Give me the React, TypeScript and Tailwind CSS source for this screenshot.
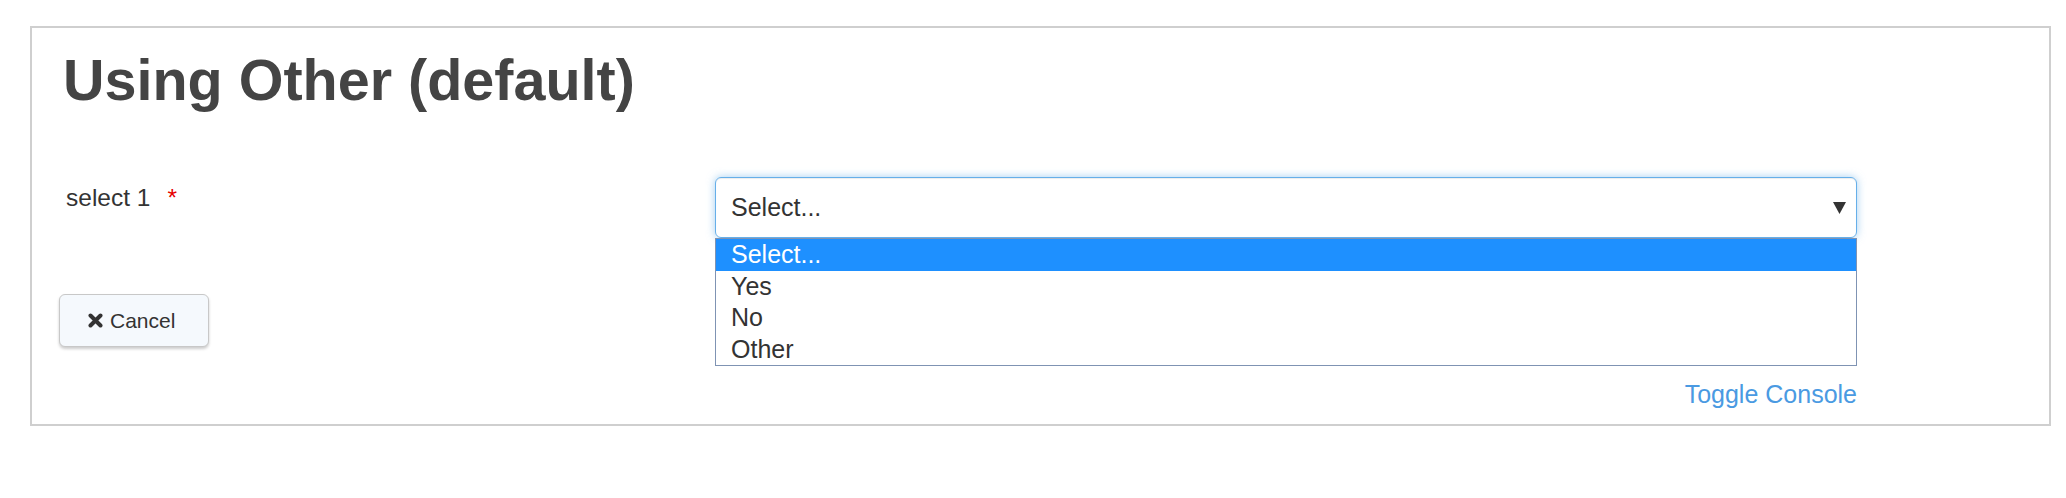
export default function App() {
  return (
    <div className="min-h-[498px] w-[2066px] bg-white pl-[30px] pt-[26px]" style={{ fontFamily: '"Liberation Sans", Arial, sans-serif' }}>
      <div className="flex h-[400px] w-[2021px] flex-col border-2 border-[#cfcfcf] pl-[31px]">
        {/* Header */}
        <h1 className="mt-[20px] text-[57.5px] font-bold leading-[64px] text-[#444444]">Using Other (default)</h1>

        {/* Form row */}
        <div className="mt-[65px] flex">
          <div className="w-[652px] pl-[3px] pt-[4px] text-[24.5px] leading-[34px] text-[#333333]">
            select 1<span className="ml-[17px] text-[#e60000]">*</span>
          </div>
          <div className="relative w-[1142px]">
            <div className="flex h-[61px] items-center justify-between rounded-[6px] border border-[#66afe9] pl-[15px] pr-[10px] text-[25px] text-[#333333] shadow-[inset_0_1px_1px_rgba(0,0,0,0.075),0_0_8px_rgba(102,175,233,0.6)]">
              <span>Select...</span>
              <svg width="13" height="12" viewBox="0 0 13 12">
                <path d="M0 0 H13 L6.5 12 Z" fill="#333333" />
              </svg>
            </div>
            {/* Open option list */}
            <div className="absolute left-0 top-[61px] z-10 w-[1142px] border border-[#7f93b3] bg-white text-[25px] leading-[31.5px] text-[#333333]">
              <div className="bg-[#1e90ff] pl-[15px] text-white">Select...</div>
              <div className="pl-[15px]">Yes</div>
              <div className="pl-[15px]">No</div>
              <div className="pl-[15px]">Other</div>
            </div>
          </div>
        </div>

        {/* Actions */}
        <div className="mt-[56px]">
          <button className="-ml-[4px] flex h-[53px] w-[150px] items-center gap-[7px] rounded-[6px] border border-[#c8c8c8] bg-[#f5f9fd] pl-[28px] text-[21px] text-[#333333] shadow-[0_2px_3px_rgba(0,0,0,0.2)]">
            <svg width="15" height="15" viewBox="0 0 15 15">
              <path d="M2.5 2.5 L12.5 12.5 M12.5 2.5 L2.5 12.5" stroke="#333333" strokeWidth="4" strokeLinecap="round" />
            </svg>
            Cancel
          </button>
        </div>

        <div className="mt-[32px] flex w-[1794px] justify-end">
          <a className="text-[25px] leading-[30px] text-[#4a9ae2]">Toggle Console</a>
        </div>
      </div>
    </div>
  );
}
